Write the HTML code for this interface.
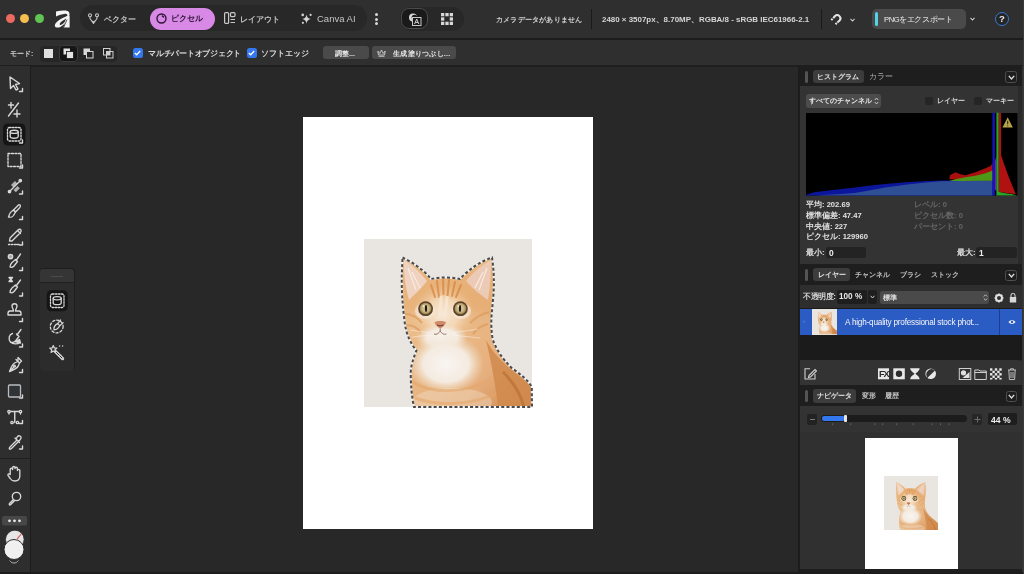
<!DOCTYPE html>
<html><head><meta charset="utf-8">
<style>
*{box-sizing:border-box;margin:0;padding:0}
html,body{width:1024px;height:574px;overflow:hidden;background:#272727;font-family:"Liberation Sans",sans-serif;color:#d8d8d8}
.a{position:absolute}
.t{position:absolute;white-space:nowrap;line-height:1}
svg{position:absolute;overflow:visible}
.t{will-change:transform}
</style></head><body>

<!-- top toolbar -->
<div class="a" style="left:0;top:0;width:1024px;height:38px;background:#2f2f2f"></div>
<div class="a" style="left:0;top:38px;width:1024px;height:1.5px;background:#1c1c1c"></div>
<!-- traffic lights -->
<div class="a" style="left:6px;top:14px;width:9px;height:9px;border-radius:50%;background:#ec6a5e"></div>
<div class="a" style="left:20px;top:14px;width:9px;height:9px;border-radius:50%;background:#f4bf4f"></div>
<div class="a" style="left:34.5px;top:14px;width:9px;height:9px;border-radius:50%;background:#61c554"></div>
<!-- logo a -->
<svg style="left:54px;top:9.5px" width="16" height="18" viewBox="0 0 16 18">
<path d="M2 1.6 C6 0.9 10 0.4 12.5 0.7 C15.2 1.1 16.2 3.2 15.2 6.6 L13.4 6.6 C13.8 4.8 13 3.5 11 3.7 C8 4.1 5 5.1 2 6.4 Z" fill="#f4f4f4"/>
<path d="M14.6 5.2 C10 7.3 4 9.8 1.5 13.4 C0.1 15.6 1 17.6 3.6 17.6 C7.2 17.6 11.2 14 15 7.8 Z M12.8 8 C10 9.9 6.8 11.7 5.9 13.4 C5.3 14.6 6.3 15.4 7.7 14.6 C9.9 13.3 11.7 10.9 12.8 8 Z" fill="#f4f4f4" fill-rule="evenodd"/>
<path d="M12.6 7 L15.6 6 L15.6 17.5 L9.4 17.5 Z" fill="#f4f4f4"/>
<path d="M13 9.5 L9.6 17.6" stroke="#2f2f2f" stroke-width="0.8"/>
</svg>
<!-- persona group -->
<div class="a" style="left:80px;top:5px;width:287px;height:26px;border-radius:13px;background:#282828"></div>
<svg style="left:87.5px;top:13px" width="11" height="12" viewBox="0 0 11 12">
<circle cx="2" cy="2.2" r="1.5" fill="none" stroke="#c8c8c8" stroke-width="1.1"/>
<circle cx="9" cy="2.2" r="1.5" fill="none" stroke="#c8c8c8" stroke-width="1.1"/>
<path d="M2 3.7 V5.5 L5.5 10.5 L9 5.5 V3.7 M4 8 C5 9 6 9 7 8" fill="none" stroke="#c8c8c8" stroke-width="1.1" stroke-linejoin="round"/>
</svg>
<div class="t" style="left:104px;top:15.5px;font-size:8px;font-weight:bold;color:#c4c4c4">ベクター</div>
<div class="a" style="left:150px;top:7.5px;width:65px;height:22.5px;border-radius:11px;background:#d889e6"></div>
<svg style="left:156px;top:13px" width="11" height="11" viewBox="0 0 11 11">
<circle cx="5.5" cy="5.5" r="4.5" fill="none" stroke="#2e1535" stroke-width="1.4"/>
<path d="M6.3 2.9 L7.6 4.1" stroke="#2e1535" stroke-width="1.3" stroke-linecap="round"/>
</svg>
<div class="t" style="left:171px;top:15.3px;font-size:8px;font-weight:bold;color:#2a1232">ピクセル</div>
<svg style="left:224px;top:12px" width="12" height="12" viewBox="0 0 12 12">
<rect x="0.6" y="0.6" width="4" height="10.8" rx="1" fill="none" stroke="#c8c8c8" stroke-width="1.2"/>
<rect x="6.5" y="0.6" width="4.5" height="4" rx="1" fill="none" stroke="#c8c8c8" stroke-width="1.2"/>
<path d="M6.5 7.5 H11 M6.5 10.5 H11" stroke="#c8c8c8" stroke-width="1.2"/>
</svg>
<div class="t" style="left:240px;top:15.5px;font-size:8px;font-weight:bold;color:#c4c4c4">レイアウト</div>
<svg style="left:296px;top:8px" width="20" height="22" viewBox="296 8 20 22">
<path d="M306.5 14.5 Q307 18.5 310.8 19.1 Q307 19.7 306.5 23.7 Q306 19.7 302.3 19.1 Q306 18.5 306.5 14.5 Z" fill="#d6d6d6"/>
<circle cx="302.7" cy="14.9" r="1.3" fill="#d0d0d0"/>
<circle cx="310.6" cy="14.9" r="1.1" fill="#d0d0d0"/>
<circle cx="302.9" cy="22.8" r="1.1" fill="#d0d0d0"/>
</svg>
<div class="t" style="left:317px;top:13.5px;font-size:9.5px;color:#c4c4c4">Canva AI</div>
<!-- kebab -->
<div class="a" style="left:375px;top:13px;width:3.2px;height:3.2px;border-radius:50%;background:#d8d8d8"></div>
<div class="a" style="left:375px;top:17.6px;width:3.2px;height:3.2px;border-radius:50%;background:#d8d8d8"></div>
<div class="a" style="left:375px;top:22.2px;width:3.2px;height:3.2px;border-radius:50%;background:#d8d8d8"></div>
<!-- mode group -->
<div class="a" style="left:400px;top:7px;width:64px;height:24px;border-radius:12px;background:#282828"></div>
<div class="a" style="left:400.7px;top:8.4px;width:27.3px;height:21.1px;border-radius:8px;background:#1a1a1a;border:1px solid #4a4a4a"></div>
<svg style="left:408px;top:13px" width="14" height="13" viewBox="0 0 14 13">
<circle cx="5" cy="4.5" r="4" fill="#d8d8d8"/>
<circle cx="6.5" cy="4.5" r="2.8" fill="#1a1a1a"/>
<rect x="4.5" y="4.5" width="8.5" height="8" fill="#1a1a1a" stroke="#c8c8c8" stroke-width="1"/>
<path d="M6.6 11 L8.7 6 L10.8 11 M7.4 9.4 H10" fill="none" stroke="#d0d0d0" stroke-width="1"/>
</svg>
<svg style="left:441px;top:12.5px" width="12" height="12" viewBox="0 0 12 12">
<g fill="#d8d8d8">
<rect x="0" y="0" width="3.3" height="3.3"/><rect x="4.35" y="0" width="3.3" height="3.3"/><rect x="8.7" y="0" width="3.3" height="3.3"/>
<rect x="0" y="4.35" width="3.3" height="3.3"/><rect x="8.7" y="4.35" width="3.3" height="3.3"/>
<rect x="0" y="8.7" width="3.3" height="3.3"/><rect x="4.35" y="8.7" width="3.3" height="3.3"/><rect x="8.7" y="8.7" width="3.3" height="3.3"/>
</g>
</svg>
<!-- status -->
<div class="t" style="left:495.5px;top:16px;font-size:7px;letter-spacing:0.2px;font-weight:bold;color:#d2d2d2">カメラデータがありません</div>
<div class="a" style="left:591px;top:9px;width:1px;height:20px;background:#1a1a1a"></div>
<div class="t" style="left:601.8px;top:15.5px;font-size:7.95px;font-weight:bold;color:#d6d6d6">2480 × 3507px、8.70MP、RGBA/8 - sRGB IEC61966-2.1</div>
<div class="a" style="left:821px;top:9px;width:1px;height:20px;background:#1a1a1a"></div>
<svg style="left:826px;top:8px" width="32" height="24" viewBox="826 8 32 24">
<path d="M833.2 18.2 L835.04 16.04 A3.2 3.2 0 0 1 839.56 20.56 L837.4 22.4" fill="none" stroke="#e6e6e6" stroke-width="2"/>
<path d="M832.6 18.8 L831.3 20.1 M836.8 23 L835.5 24.3" fill="none" stroke="#e6e6e6" stroke-width="2"/>
</svg>
<svg style="left:849.5px;top:17.5px" width="5" height="4" viewBox="0 0 5 4"><path d="M0.5 0.8 L2.5 3 L4.5 0.8" fill="none" stroke="#cfcfcf" stroke-width="1.1"/></svg>
<!-- export -->
<div class="a" style="left:872px;top:9px;width:94px;height:19.5px;border-radius:5px;background:#4a4a4a"></div>
<div class="a" style="left:875px;top:12px;width:3px;height:14px;border-radius:1.5px;background:#52d4e8"></div>
<div class="t" style="left:884px;top:16px;font-size:7.6px;letter-spacing:-0.4px;color:#ececec">PNGをエクスポート</div>
<svg style="left:970px;top:17px" width="5" height="4" viewBox="0 0 5 4"><path d="M0.5 0.8 L2.5 3 L4.5 0.8" fill="none" stroke="#cfcfcf" stroke-width="1.1"/></svg>
<div class="a" style="left:995.4px;top:11.6px;width:14px;height:14px;border-radius:50%;background:#262626;border:1.4px solid #3a78d8"></div>
<div class="t" style="left:999.4px;top:14.3px;font-size:9.5px;font-weight:bold;color:#ececec">?</div>
<!-- context bar -->
<div class="a" style="left:0;top:39.5px;width:1024px;height:26.5px;background:#2f2f2f"></div>
<div class="a" style="left:0;top:65px;width:1024px;height:1.5px;background:#1e1e1e"></div>
<div class="t" style="left:10px;top:51px;font-size:6.8px;font-weight:bold;color:#d0d0d0">モード:</div>
<div class="a" style="left:40px;top:45.5px;width:77px;height:16.5px;border-radius:4px;background:#262626"></div>
<div class="a" style="left:44px;top:49px;width:9px;height:9px;background:#e0e0e0"></div>
<div class="a" style="left:58.5px;top:44.5px;width:19px;height:17px;border-radius:4px;background:#151515;border:1px solid #3c3c3c"></div>
<svg style="left:63px;top:48px" width="11" height="11" viewBox="0 0 11 11">
<rect x="0.5" y="0.5" width="6.5" height="6" fill="#e4e4e4"/>
<rect x="3.5" y="3.5" width="7" height="7" fill="#e4e4e4" stroke="#151515" stroke-width="0.8"/>
</svg>
<svg style="left:83px;top:48px" width="11" height="11" viewBox="0 0 11 11">
<rect x="0.5" y="0.5" width="6.5" height="6.5" fill="#d8d8d8"/>
<rect x="3.5" y="3.5" width="6.5" height="6.5" fill="#262626" stroke="#d8d8d8" stroke-width="1"/>
</svg>
<svg style="left:103px;top:48px" width="11" height="11" viewBox="0 0 11 11">
<rect x="0.5" y="0.5" width="6.5" height="6.5" fill="none" stroke="#d0d0d0" stroke-width="1"/>
<rect x="3.5" y="3.5" width="6.5" height="6.5" fill="none" stroke="#d0d0d0" stroke-width="1"/>
<rect x="3.5" y="3.5" width="3.5" height="3.5" fill="#d0d0d0"/>
</svg>
<div class="a" style="left:132.5px;top:48px;width:10px;height:10px;border-radius:2.5px;background:#3478f0"></div>
<svg style="left:134px;top:50px" width="7" height="6" viewBox="0 0 7 6"><path d="M0.8 3 L2.7 4.8 L6.2 1" fill="none" stroke="#fff" stroke-width="1.3"/></svg>
<div class="t" style="left:147.5px;top:49.5px;font-size:8px;letter-spacing:-0.25px;font-weight:bold;color:#dcdcdc">マルチパートオブジェクト</div>
<div class="a" style="left:246.5px;top:48px;width:10px;height:10px;border-radius:2.5px;background:#3478f0"></div>
<svg style="left:248px;top:50px" width="7" height="6" viewBox="0 0 7 6"><path d="M0.8 3 L2.7 4.8 L6.2 1" fill="none" stroke="#fff" stroke-width="1.3"/></svg>
<div class="t" style="left:260.5px;top:49.5px;font-size:7.9px;font-weight:bold;color:#dcdcdc">ソフトエッジ</div>
<div class="a" style="left:323px;top:46.3px;width:45.5px;height:13px;border-radius:3px;background:#4a4a4a"></div>
<div class="t" style="left:335px;top:49.5px;font-size:7px;font-weight:bold;color:#e8e8e8">調整...</div>
<div class="a" style="left:371.5px;top:46.3px;width:84.5px;height:13px;border-radius:3px;background:#4a4a4a"></div>
<svg style="left:377px;top:48.5px" width="9" height="8" viewBox="0 0 9 8">
<path d="M0.8 2 L2.8 4.5 L4.5 1 L6.2 4.5 L8.2 2 L7.5 6 L1.5 6 Z" fill="none" stroke="#cfcfcf" stroke-width="0.9"/>
<path d="M1.5 7.3 H7.5" stroke="#cfcfcf" stroke-width="0.9"/>
</svg>
<div class="t" style="left:392.5px;top:49.5px;font-size:7.2px;letter-spacing:0.26px;font-weight:bold;color:#e4e4e4">生成塗りつぶし...</div>

<!-- left toolbar -->
<div class="a" style="left:0;top:66px;width:30px;height:508px;background:#2e2e2e"></div>
<div class="a" style="left:30px;top:66px;width:1px;height:508px;background:#1c1c1c"></div>
<div class="a" style="left:0;top:457.5px;width:30px;height:1px;background:#1f1f1f"></div>
<svg style="left:0;top:66px" width="30" height="508" viewBox="0 66 30 508">
<g fill="none" stroke="#d8d8d8" stroke-width="1.4" stroke-linejoin="round" stroke-linecap="round">
<!-- flyout corners -->
<path d="M19.5 91.5 H22.5 V88.5"/>
<path d="M19.5 143 H22.5 V140"/>
<path d="M19.5 168 H22.5 V165"/>
<path d="M19.5 194 H22.5 V191"/>
<path d="M19.5 219.5 H22.5 V216.5"/>
<path d="M19.5 245 H22.5 V242"/>
<path d="M19.5 270.5 H22.5 V267.5"/>
<path d="M19.5 296 H22.5 V293"/>
<path d="M19.5 321.5 H22.5 V318.5"/>
<path d="M19.5 347 H22.5 V344"/>
<path d="M19.5 372.5 H22.5 V369.5"/>
<path d="M19.5 398 H22.5 V395"/>
<path d="M19.5 423.5 H22.5 V420.5"/>
<path d="M19.5 449 H22.5 V446"/>
<!-- pointer -->
<path d="M10 77 L19.5 83.5 L15.5 84.5 L18 89 L16 90 L13.5 85.5 L10.5 88.5 Z"/>
<!-- crop/plus -->
<path d="M11 102.5 V108 M8.5 105 H13.5 M8.5 116 L18.5 103 M17 110 V117 M14 114 H20"/>
</g>
<!-- selected tool bg -->
<rect x="3" y="123.5" width="22.5" height="22" rx="4.5" fill="#151515"/>
<g fill="none" stroke="#d8d8d8" stroke-width="1.35" stroke-linejoin="round" stroke-linecap="round">
<path d="M19.5 143 H22.5 V140"/>
<rect x="7.5" y="127.5" width="13.5" height="13.5" rx="2" stroke-dasharray="1.6 1.4"/>
<ellipse cx="14.2" cy="131.8" rx="4" ry="1.6"/>
<path d="M10.2 131.8 V136.5 C10.2 138.8 18.2 138.8 18.2 136.5 V131.8"/>
<!-- rect marquee -->
<rect x="8" y="153.5" width="13" height="13" stroke-dasharray="2 1.5"/>
<!-- selection brush -->
<path d="M9.5 191.5 L20.5 180.5"/>
<circle cx="9.5" cy="191.5" r="1.2"/>
<circle cx="20.3" cy="180.5" r="1.2"/>
<path d="M11 185 L15 181 L17.5 183.5 L13.5 187.5 Z M13.5 190 L17.5 186 L19.8 188.3 L15.8 192.3 Z" fill="#d2d2d2" stroke="none" opacity="0.8"/>
<!-- brush -->
<path d="M20 205 C21 206 20 207.5 18.5 209 L15.5 212 L13.5 210 L16.5 207 C18 205.5 19 204 20 205 Z"/>
<path d="M13.5 210 L15.5 212 L13.5 215.5 C12.5 217 10 217.5 8.5 217 C9 215 10 212.5 11.5 211.5 Z"/>
<!-- pixel/pencil -->
<path d="M10 238 L18 230 C19 229 20.5 229 21 230 C21.5 231 21 232 20 233 L12 241 L9.5 241 Z M17.5 230.5 L20.5 233.5"/>
<path d="M8.5 244.5 H10 M11.5 244.5 H13 M14.5 244.5 H16 M17 244.5 H19" stroke-width="1.3"/>
<!-- erase/dodge -->
<circle cx="10.5" cy="256.5" r="2.2" fill="#a8a8a8"/>
<path d="M20.5 254 L16 260.5 M15.5 259.5 L17.5 261.5 L14 266 C13 267 11 267.5 10 267 C10 265.5 11 263.5 12 262.5 Z"/>
<!-- burn/sponge -->
<path d="M9 277.5 H12.5 L10.8 279.5 L12.5 281.5 H9 L10.8 279.5 Z" fill="#d2d2d2"/>
<path d="M20.5 280 L16 286 M15.5 285 L17.5 287 L14 291.5 C13 292.5 11 293 10 292.5 C10 291 11 289 12 288 Z"/>
<!-- stamp -->
<path d="M12 306 C12 303 17 303 17 306 C17 308 15.5 309 15.5 311 H19 C20.5 311 21 312 21 313.5 V315 H8 V313.5 C8 312 8.5 311 10 311 H13.5 C13.5 309 12 308 12 306 Z"/>
<!-- smudge/repair -->
<path d="M21 329.5 L17 335 M16.5 334 L19 336.5 L15.5 341 C14 342.5 11.5 342.5 10.5 342"/>
<path d="M12.5 333.5 C9 334.5 8 339 10.5 342 C13 344.5 17.5 344.5 20 342.5" />
<path d="M15 341.5 L19.5 339.5 L20.5 343 Z" fill="#d2d2d2"/>
<!-- pen -->
<path d="M18 357.5 L21.5 361 L19.5 363 L18 366.5 C16 369 12.5 370.5 9.5 371.5 C10.5 368.5 12 365 14.5 363 L18 361.5 Z M16 359.5 L19.5 363 M9.5 371.5 L14 367"/>
<circle cx="14.5" cy="366" r="0.9"/>
<!-- rectangle -->
<rect x="8.5" y="385" width="12" height="12" rx="1" fill="#2f3335" stroke="#bcbcbc" stroke-width="1.3"/>
<!-- text tool -->
<path d="M9 411.5 H20.5 M14.75 411.5 V422.5 M9 411.5 V414 M20.5 411.5 V414" stroke-width="1.4"/>
<circle cx="9" cy="411.5" r="1.2" fill="#2c2c2c"/>
<circle cx="20.5" cy="411.5" r="1.2" fill="#2c2c2c"/>
<circle cx="12" cy="422.5" r="1.2" fill="#2c2c2c"/>
<circle cx="17.5" cy="422.5" r="1.2" fill="#2c2c2c"/>
<!-- eyedropper -->
<path d="M17.5 436.5 C18.5 435.5 20.5 435.5 21 437 C21.5 438.5 20.5 439.5 19.5 440.5 L18.5 441.5 L16 439 Z M15 438 L19.5 442.5 M16.5 440.5 L10.5 446.5 C9.5 447.5 9 448.5 9.5 449 C10 449.5 11 449 12 448 L18 442"/>
<!-- hand -->
<path d="M10.2 474.5 V469.6 Q10.2 468.2 11.4 468.2 Q12.6 468.2 12.6 469.6 V467.9 Q12.6 466.5 13.8 466.5 Q15 466.5 15 467.9 V468.6 Q15 467.2 16.2 467.2 Q17.4 467.2 17.4 468.6 V470.6 Q17.4 469.3 18.6 469.3 Q19.8 469.3 19.8 470.6 V476 Q19.8 481 14.8 481 Q11.8 481 10.2 478.5 L8.2 475.6 Q7.5 474.4 8.6 473.9 Q9.5 473.6 10.2 474.5 Z"/>
<!-- zoom -->
<circle cx="16.5" cy="496.5" r="4.2"/>
<path d="M13.5 499.5 L9.5 503.5 C8.8 504.2 9.5 505.5 10.5 504.8 L14.5 500.8"/>
</g>
<!-- dots box -->
<rect x="2" y="516" width="25" height="9.5" rx="2" fill="#474747"/>
<circle cx="9.5" cy="520.8" r="1.4" fill="#e8e8e8"/><circle cx="14.5" cy="520.8" r="1.4" fill="#e8e8e8"/><circle cx="19.5" cy="520.8" r="1.4" fill="#e8e8e8"/>
<!-- colours -->
<circle cx="14.8" cy="539.5" r="9.3" fill="#e6e6e6" stroke="#2e2e2e" stroke-width="0.8"/>
<path d="M17.2 538.8 L21.2 534" stroke="#e05050" stroke-width="1.1"/>
<circle cx="14" cy="549.5" r="10" fill="#f0f0f0" stroke="#2c2c2c" stroke-width="1"/>
<path d="M10.5 561.5 C12 563.5 16 563.5 17.5 561.5 M9.5 560.5 L10.5 561.5 M17.5 561.5 L18.5 560.5" fill="none" stroke="#bdbdbd" stroke-width="0.9"/>
</svg>

<!-- canvas -->
<div class="a" style="left:31px;top:66.5px;width:767px;height:508px;background:#282828"></div>
<div class="a" style="left:303px;top:117px;width:290px;height:412px;background:#ffffff"></div>
<svg style="left:0;top:0;width:0;height:0" width="0" height="0"><defs>
<linearGradient id="fur" x1="0" y1="0" x2="0.9" y2="1">
<stop offset="0" stop-color="#f0cba0"/><stop offset="0.45" stop-color="#ebbd8a"/><stop offset="0.8" stop-color="#e6b07e"/><stop offset="1" stop-color="#d48e56"/>
</linearGradient>
<radialGradient id="face" cx="0.5" cy="0.5" r="0.5">
<stop offset="0" stop-color="#f8e8d6"/><stop offset="0.5" stop-color="#f3d6b4"/><stop offset="1" stop-color="#ecc08e" stop-opacity="0"/>
</radialGradient>
<radialGradient id="chest" cx="0.5" cy="0.5" r="0.5">
<stop offset="0" stop-color="#f8f5f1"/><stop offset="0.6" stop-color="#f4ebe1"/><stop offset="1" stop-color="#f0dcc4" stop-opacity="0"/>
</radialGradient>
<radialGradient id="eye" cx="0.5" cy="0.45" r="0.5">
<stop offset="0" stop-color="#ddd0a4"/><stop offset="0.6" stop-color="#c8b482"/><stop offset="0.85" stop-color="#a08a58"/><stop offset="1" stop-color="#5a4428"/>
</radialGradient>
<filter id="bl6" x="-30%" y="-30%" width="160%" height="160%"><feGaussianBlur stdDeviation="5"/></filter><filter id="bl1" x="-20%" y="-20%" width="140%" height="140%"><feGaussianBlur stdDeviation="0.6"/></filter><clipPath id="catclip"><path id="catp" d="M402.5 257.5 C412 262 424 270 431 279 C440 277 451 277 460 279 C468 270 481 261 492 257.5 C494 270 494.5 285 493 300 C492 312 490 322 492.6 339 C496 349 502 358.5 511.8 368 C520 374 528 380 531.8 387 L532 407 L414 407 C412 398 410.5 385 410.8 371 C411.5 362 415 355 416.4 350.4 C411 344 406 335 404.4 320 C402.5 305 401.5 290 401.8 275 Z"/></clipPath>
<g id="catart">
<rect x="364" y="239" width="168" height="168" fill="#e9e6e2"/>
<g clip-path="url(#catclip)">
<rect x="364" y="239" width="168" height="168" fill="url(#fur)"/>
<!-- head tint -->
<path d="M400 262 C420 275 470 275 496 262 L498 318 C470 306 420 306 398 318 Z" fill="#e4a466" opacity="0.5" filter="url(#bl6)"/>
<!-- ears inner -->
<path d="M404 260 C413 266 421 273 427 281 C420 290 413 296 409 300 C405 285 403.5 272 404 260 Z" fill="#efd2c0" filter="url(#bl1)"/>
<path d="M491 260 C482 265 473 272 466 281 C474 290 482 296 488 300 C490.5 285 491 272 491 260 Z" fill="#ebcab6" filter="url(#bl1)"/>
<path d="M408 268 L416 290 M412 272 L420 288 M487 268 L479 290 M483 272 L475 288" stroke="#faf2ea" stroke-width="1.2" opacity="0.8"/>
<!-- face lighter -->
<ellipse cx="443" cy="314" rx="32" ry="30" fill="url(#face)"/>
<!-- forehead stripes -->
<path d="M437 281 L439 297 M443 279 L443.5 294 M449 280 L447.5 296 M455 282 L452 296 M431 285 L435 297 M461 285 L456 297" stroke="#d88c48" stroke-width="2" stroke-linecap="round" opacity="0.85" filter="url(#bl1)"/>
<path d="M441 296 C441 302 440 310 440 318 M447 296 C447 302 446 310 445 318" stroke="#f7e8d6" stroke-width="3" opacity="0.8"/>
<!-- cheek stripes -->
<path d="M405 314 C413 314 418 318 422 323 M406 325 C413 325 418 328 421 333 M489 312 C481 314 475 318 470 323 M488 324 C481 326 476 329 473 334" stroke="#dc9a5c" stroke-width="2.2" fill="none" opacity="0.7" filter="url(#bl1)"/>
<!-- muzzle & chest -->
<ellipse cx="442" cy="338" rx="26" ry="15" fill="url(#chest)"/>
<ellipse cx="446" cy="364" rx="38" ry="30" fill="url(#chest)"/>
<ellipse cx="452" cy="402" rx="40" ry="14" fill="#f0dcc4" opacity="0.45"/>
<!-- chest bands -->
<path d="M413 382 C430 393 462 395 490 380 M415 398 C436 406 472 406 500 392" stroke="#e4a66a" stroke-width="3" fill="none" opacity="0.6"/>
<!-- right shoulder dark -->
<path d="M486 340 C496 358 510 370 532 386 L532 407 L498 407 C496 388 492 366 486 340 Z" fill="#d08a4c" opacity="0.85"/>
<path d="M503 372 C514 383 521 395 524 407" stroke="#b56a34" stroke-width="3" fill="none" opacity="0.6"/>
</g>
<ellipse cx="425" cy="311" rx="10" ry="8" fill="#f6e8d8" opacity="0.7" filter="url(#bl1)"/>
<ellipse cx="461" cy="311" rx="10" ry="8" fill="#f6e8d8" opacity="0.7" filter="url(#bl1)"/>
<!-- eyes -->
<circle cx="425.6" cy="308.7" r="7.4" fill="#5a4028"/>
<circle cx="425.6" cy="309" r="6.3" fill="url(#eye)"/>
<ellipse cx="426" cy="308.5" rx="1.1" ry="3.4" fill="#1e160e"/>
<circle cx="423.5" cy="306" r="1" fill="#fff" opacity="0.7"/>
<circle cx="460.4" cy="308.7" r="7.4" fill="#5a4028"/>
<circle cx="460.4" cy="309" r="6.3" fill="url(#eye)"/>
<ellipse cx="460" cy="308.5" rx="1.1" ry="3.4" fill="#1e160e"/>
<circle cx="458.3" cy="306" r="1" fill="#fff" opacity="0.7"/>
<!-- nose & mouth -->
<path d="M434.5 322 C437 320.5 443 320.5 446 322 C445.5 325 442.5 327.5 440.2 328.5 C438 327.5 435 325 434.5 322 Z" fill="#d08a6a"/>
<path d="M437 325 C438.5 326 441.8 326 443.4 325" stroke="#5a3424" stroke-width="1" fill="none"/>
<path d="M440.2 328.5 V331 M434 334 C437 335 439 333 440.2 331 C441.4 333 443.4 335 446.4 334" stroke="#8a6050" stroke-width="0.9" fill="none"/>
<!-- whiskers -->
<path d="M430 333 L410 330 M430 335 L412 337 M452 333 L478 329 M452 335 L480 338" stroke="#fbf6f0" stroke-width="0.6" opacity="0.8"/>
</g></defs></svg>
<svg style="left:364px;top:239px" width="168" height="168" viewBox="364 239 168 168"><use href="#catart"/><!-- selection ants -->
<use href="#catp" fill="none" stroke="#f4f4f4" stroke-width="1.8"/>
<use href="#catp" fill="none" stroke="#4a4a4a" stroke-width="2" stroke-dasharray="3 2.2"/>
</svg>

<!-- floating sub-toolbar -->
<div class="a" style="left:39.5px;top:268.3px;width:35px;height:103px;border-radius:4px;background:#1e1e1e"></div>
<div class="a" style="left:40.3px;top:269px;width:33.5px;height:101.5px;border-radius:3.5px;background:#2c2c2c"></div>
<div class="a" style="left:40.3px;top:269px;width:33.5px;height:13.3px;border-radius:3.5px 3.5px 0 0;background:#353535"></div>
<div class="a" style="left:40.3px;top:282.3px;width:33.5px;height:1px;background:#1f1f1f"></div>
<div class="a" style="left:51px;top:275.5px;width:11.5px;height:1.2px;background:#4c4c4c"></div>
<svg style="left:40px;top:283px" width="34" height="88" viewBox="40 283 34 88">
<rect x="46.7" y="290.3" width="21" height="21" rx="4.5" fill="#151515"/>
<g fill="none" stroke="#d8d8d8" stroke-width="1.3" stroke-linejoin="round" stroke-linecap="round">
<rect x="50.5" y="294" width="13.5" height="13.5" rx="2" stroke-dasharray="1.6 1.4"/>
<ellipse cx="57.2" cy="298.3" rx="4" ry="1.6"/>
<path d="M53.2 298.3 V303 C53.2 305.3 61.2 305.3 61.2 303 V298.3"/>
<circle cx="56.7" cy="326.5" r="6.4" stroke-dasharray="2.2 2"/>
<path d="M54 330 C53.6 327.5 55.2 324.8 57.6 323.6 L59.7 325.7 C58.6 328 56.5 329.6 54 330 Z" stroke-width="1.2"/>
<path d="M57.6 323.6 L60.6 320 M59.7 325.7 L63.2 322.6" stroke-width="1.2"/>
<path d="M53.30 345.50 L54.30 347.92 L56.91 348.13 L54.92 349.83 L55.53 352.37 L53.30 351.00 L51.07 352.37 L51.68 349.83 L49.69 348.13 L52.30 347.92 Z" stroke-width="1.2"/>
<path d="M55.8 351.8 L62.6 358.6" stroke-width="3.2"/>
<path d="M56.4 352.4 L62 358" stroke="#2c2c2c" stroke-width="1"/>
<path d="M59 356.6 L60.6 355" stroke="#d8d8d8" stroke-width="1"/>
<circle cx="59.6" cy="346" r="0.7" fill="#d8d8d8" stroke="none"/>
<circle cx="62.6" cy="346" r="0.7" fill="#d8d8d8" stroke="none"/>
</g>
</svg>

<!-- right panel -->
<div class="a" style="left:798px;top:66px;width:2px;height:508px;background:#1c1c1c"></div>
<div class="a" style="left:800px;top:66px;width:224px;height:508px;background:#333333"></div>
<div class="a" style="left:1017.5px;top:86px;width:4.5px;height:488px;background:#2a2a2a"></div>

<!-- histogram header -->
<div class="a" style="left:800px;top:66px;width:222px;height:20px;background:#1e1e1e"></div>
<div class="a" style="left:804.5px;top:70.5px;width:3.2px;height:12px;border-radius:1.5px;background:#545454"></div>
<div class="a" style="left:812.5px;top:70px;width:51.7px;height:13px;border-radius:3px;background:#3c3c3c"></div>
<div class="t" style="left:817.4px;top:73px;font-size:7.2px;font-weight:bold;color:#e2e2e2">ヒストグラム</div>
<div class="t" style="left:868.5px;top:72.5px;font-size:7.8px;color:#b0b0b0">カラー</div>
<div class="a" style="left:1005.3px;top:71px;width:11.5px;height:11.5px;border-radius:2.5px;border:1px solid #4e4e4e;background:#1e1e1e"></div>
<svg style="left:1007.5px;top:74.5px" width="7" height="5" viewBox="0 0 7 5"><path d="M0.8 0.8 L3.5 4 L6.2 0.8" fill="none" stroke="#e0e0e0" stroke-width="1.3"/></svg>
<!-- channel dropdown -->
<div class="a" style="left:805.7px;top:94px;width:75.5px;height:13.8px;border-radius:3px;background:#4c4c4c"></div>
<div class="t" style="left:809px;top:97px;font-size:7.4px;font-weight:bold;color:#e4e4e4">すべてのチャンネル</div>
<svg style="left:874px;top:97px" width="5" height="8" viewBox="0 0 5 8"><path d="M0.8 3 L2.5 1 L4.2 3 M0.8 5 L2.5 7 L4.2 5" fill="none" stroke="#d0d0d0" stroke-width="0.9"/></svg>
<div class="a" style="left:925px;top:96.5px;width:8px;height:8px;border-radius:2px;background:#252525"></div>
<div class="t" style="left:936.5px;top:97.5px;font-size:6.7px;font-weight:bold;color:#d6d6d6">レイヤー</div>
<div class="a" style="left:974px;top:96.5px;width:8px;height:8px;border-radius:2px;background:#252525"></div>
<div class="t" style="left:985.5px;top:97.5px;font-size:6.7px;font-weight:bold;color:#d6d6d6">マーキー</div>
<!-- histogram -->
<svg style="left:805.5px;top:112.7px" width="211.5" height="82.5" viewBox="805.5 112.7 211.5 82.5">
<rect x="805.5" y="112.7" width="211.5" height="82.5" fill="#000"/>
<path d="M805.5 194.5 L809 193.5 L813.7 192 L830 190 L854.7 187.2 L870 185.3 L884.8 183.7 L905 182 L923 181 L940 180.3 L992 180 L992 195.2 L805.5 195.2 Z" fill="#0c169c"/>
<path d="M815 195.2 L827 194.5 L840 193.8 L854 192.6 L870 190 L884.8 187.2 L905 184.5 L923 182.4 L940 181 L960 180.8 L992 180.5 L992 195.2 Z" fill="#2f4f94"/>
<path d="M948.8 179 L949.5 175 L955 172 L960 174 L965 175 L975 172 L985 168 L990 165.7 L992 163 L992 180.5 L975 179 L960 179.5 Z" fill="#a81010"/>
<path d="M948.8 180.6 L955 179 L965 177 L975 175.5 L985 173 L990.4 171 L992 170 L992 180.5 L960 180.8 Z" fill="#4e9818"/>
<path d="M994 162 L996 155.5 L996 190 L994 190 Z" fill="#6a2aa0"/>
<rect x="992" y="112.4" width="2.3" height="82.8" fill="#1414c8"/>
<path d="M995.9 112.4 L998.2 112.4 L998.2 191.5 L1005 193 L1012 194 L1016 195.2 L995.9 195.2 Z" fill="#2aa52a"/>
<path d="M998.4 112.4 L1000.6 112.4 L1000.6 155 L1004 165 L1008 176 L1012 186 L1015.4 194 L1000.6 192 L998.4 191.5 Z" fill="#b01212"/>
<path d="M1007.2 117 L1012.3 127.2 L1002 127.2 Z" fill="#b6a446"/>
<path d="M1007.2 120.5 V124 M1007.2 125.2 V126" stroke="#222" stroke-width="1"/>
</svg>
<!-- stats -->
<div class="t" style="left:806px;top:201px;font-size:7.6px;font-weight:bold;color:#e2e2e2">平均: 202.69</div>
<div class="t" style="left:806px;top:211.5px;font-size:7.6px;font-weight:bold;color:#e2e2e2">標準偏差: 47.47</div>
<div class="t" style="left:806px;top:222.5px;font-size:7.6px;font-weight:bold;color:#e2e2e2">中央値: 227</div>
<div class="t" style="left:806px;top:233px;font-size:7.6px;font-weight:bold;color:#e2e2e2">ピクセル: 129960</div>
<div class="t" style="left:913.5px;top:201px;font-size:7.6px;font-weight:bold;color:#666666">レベル: 0</div>
<div class="t" style="left:913.5px;top:211.5px;font-size:7.6px;font-weight:bold;color:#666666">ピクセル数: 0</div>
<div class="t" style="left:913.5px;top:222.5px;font-size:7.6px;font-weight:bold;color:#666666">パーセント: 0</div>
<div class="t" style="left:806px;top:248.5px;font-size:7.6px;font-weight:bold;color:#e2e2e2">最小:</div>
<div class="a" style="left:825.6px;top:246.8px;width:40.3px;height:11px;border-radius:2.5px;background:#232323"></div>
<div class="t" style="left:828.5px;top:248.5px;font-size:8.4px;font-weight:bold;color:#ececec">0</div>
<div class="t" style="left:956.8px;top:248.5px;font-size:7.6px;font-weight:bold;color:#e2e2e2">最大:</div>
<div class="a" style="left:976.3px;top:246.8px;width:40.3px;height:11px;border-radius:2.5px;background:#232323"></div>
<div class="t" style="left:979px;top:248.5px;font-size:8.4px;font-weight:bold;color:#ececec">1</div>

<!-- layers header -->
<div class="a" style="left:800px;top:263.5px;width:222px;height:21.5px;background:#1e1e1e"></div>
<div class="a" style="left:804.8px;top:269px;width:3.2px;height:12px;border-radius:1.5px;background:#545454"></div>
<div class="a" style="left:812.7px;top:268.3px;width:37.3px;height:13px;border-radius:3px;background:#3c3c3c"></div>
<div class="t" style="left:817.5px;top:271px;font-size:7.3px;font-weight:bold;color:#e2e2e2">レイヤー</div>
<div class="t" style="left:855.3px;top:271px;font-size:7.2px;font-weight:bold;color:#c0c0c0">チャンネル</div>
<div class="t" style="left:900.2px;top:271px;font-size:7.2px;font-weight:bold;color:#c0c0c0">ブラシ</div>
<div class="t" style="left:930.7px;top:271px;font-size:7.2px;font-weight:bold;color:#c0c0c0">ストック</div>
<div class="a" style="left:1005.3px;top:269.5px;width:11.5px;height:11.5px;border-radius:2.5px;border:1px solid #4e4e4e;background:#1e1e1e"></div>
<svg style="left:1007.5px;top:273px" width="7" height="5" viewBox="0 0 7 5"><path d="M0.8 0.8 L3.5 4 L6.2 0.8" fill="none" stroke="#e0e0e0" stroke-width="1.3"/></svg>
<!-- opacity row -->
<div class="a" style="left:800px;top:285px;width:222px;height:23px;background:#2e2e2e"></div>
<div class="t" style="left:802.8px;top:293px;font-size:8px;letter-spacing:-0.45px;font-weight:bold;color:#d4d4d4">不透明度:</div>
<div class="a" style="left:837.3px;top:290px;width:29.7px;height:13.5px;border-radius:2px;background:#1e1e1e"></div>
<div class="t" style="left:839px;top:293px;font-size:8.2px;font-weight:bold;color:#e8e8e8">100 %</div>
<div class="a" style="left:868px;top:290px;width:8.5px;height:13.5px;border-radius:2px;background:#1e1e1e"></div>
<svg style="left:870px;top:295px" width="5" height="4" viewBox="0 0 5 4"><path d="M0.6 0.8 L2.5 3 L4.4 0.8" fill="none" stroke="#cfcfcf" stroke-width="1"/></svg>
<div class="a" style="left:879.6px;top:290.5px;width:109.4px;height:13.4px;border-radius:2.5px;background:#4a4a4a"></div>
<div class="t" style="left:882.5px;top:293.5px;font-size:7.4px;font-weight:bold;color:#dcdcdc">標準</div>
<svg style="left:982.5px;top:294px" width="5" height="7" viewBox="0 0 5 7"><path d="M0.8 2.5 L2.5 0.8 L4.2 2.5 M0.8 4.5 L2.5 6.2 L4.2 4.5" fill="none" stroke="#cfcfcf" stroke-width="0.9"/></svg>
<svg style="left:994px;top:292.5px" width="10" height="10" viewBox="0 0 10 10">
<circle cx="5" cy="5" r="3" fill="none" stroke="#e0e0e0" stroke-width="2"/>
<path d="M5 0.5 V2 M5 8 V9.5 M0.5 5 H2 M8 5 H9.5 M1.8 1.8 L2.9 2.9 M7.1 7.1 L8.2 8.2 M1.8 8.2 L2.9 7.1 M7.1 2.9 L8.2 1.8" stroke="#e0e0e0" stroke-width="1.6"/>
</svg>
<svg style="left:1009px;top:291.5px" width="8" height="11" viewBox="0 0 8 11">
<path d="M2 5 V3.2 C2 1 6 1 6 3.2 V5" fill="none" stroke="#cfcfcf" stroke-width="1.1"/>
<rect x="0.8" y="5" width="6.4" height="5.5" fill="#d8d8d8"/>
</svg>
<!-- layer row -->
<div class="a" style="left:800px;top:308px;width:222px;height:1.3px;background:#1a1a1a"></div>
<div class="a" style="left:799.7px;top:309.3px;width:222.3px;height:25.6px;background:#2a5cc4"></div>
<div class="a" style="left:999.3px;top:309.3px;width:1px;height:25.6px;background:#1e3f88"></div>
<div class="t" style="left:803px;top:318px;font-size:6px;color:#7a9ad8">›</div>
<div class="a" style="left:811.7px;top:309.3px;width:25.6px;height:25.6px;background:#f1ede8;overflow:hidden">
<svg style="left:0;top:0" width="25.6" height="25.6" viewBox="364 239 168 168"><use href="#catart"/></svg>
</div>
<div class="t" style="left:845.2px;top:318.5px;font-size:8.2px;letter-spacing:-0.2px;color:#f6f6f6">A high-quality professional stock phot...</div>
<svg style="left:1007.5px;top:318.5px" width="8" height="6" viewBox="0 0 8 6">
<path d="M0.5 3 C2 0.5 6 0.5 7.5 3 C6 5.5 2 5.5 0.5 3 Z" fill="#f0f0f0"/>
<circle cx="4" cy="3" r="1.2" fill="#2a5cc4"/>
</svg>
<!-- empty layers -->
<div class="a" style="left:800px;top:334.9px;width:222px;height:25.6px;background:#1b1b1b"></div>
<!-- layer toolbar -->
<div class="a" style="left:800px;top:360.5px;width:222px;height:24.2px;background:#333333"></div>
<svg style="left:800px;top:360px" width="222" height="25" viewBox="800 360 222 25">
<g fill="none" stroke="#cfcfcf" stroke-width="1.1">
<path d="M810 368.8 H805 V379 H815 V374"/>
<path d="M809 375.5 L815 369.5 L816.5 371 L810.5 377 L808.5 377.5 Z"/>
</g>
<rect x="878" y="368.3" width="11" height="11" fill="#e8e8e8"/>

<rect x="893.3" y="368.3" width="11.5" height="11" fill="#e8e8e8"/>
<circle cx="899" cy="373.8" r="3.2" fill="#2c2c2c"/>
<path d="M910.2 368.3 H919.6 C919.6 371 916.5 372.5 915.5 373.8 C916.5 375 919.6 376.5 919.6 379.3 H910.2 C910.2 376.5 913.5 375 914.5 373.8 C913.5 372.5 910.2 371 910.2 368.3 Z" fill="#e8e8e8"/>
<circle cx="930.7" cy="373.8" r="5.3" fill="#e8e8e8"/>
<path d="M926.8 377.5 L934.5 370" stroke="#333" stroke-width="1.4"/>
<path d="M927.2 377 A5 5 0 0 1 934.3 370.2 Z" fill="#333"/>
<rect x="959.3" y="368.5" width="11.5" height="11" fill="none" stroke="#cfcfcf" stroke-width="1"/>
<circle cx="963.5" cy="372.8" r="2.6" fill="#e0e0e0"/>
<path d="M962.5 378 H969.5 V372 Z" fill="#e0e0e0"/>
<path d="M974.8 370 H979 L980 371 H986.3 V379.5 H974.8 Z M974.8 372.5 H986.3" fill="none" stroke="#cfcfcf" stroke-width="1"/>
<g fill="#e8e8e8">
<rect x="990" y="368.3" width="2.4" height="2.4"/><rect x="994.8" y="368.3" width="2.4" height="2.4"/><rect x="999.3" y="368.3" width="2.4" height="2.4"/>
<rect x="992.4" y="370.7" width="2.4" height="2.4"/><rect x="997.2" y="370.7" width="2.4" height="2.4"/>
<rect x="990" y="373.1" width="2.4" height="2.4"/><rect x="994.8" y="373.1" width="2.4" height="2.4"/><rect x="999.3" y="373.1" width="2.4" height="2.4"/>
<rect x="992.4" y="375.5" width="2.4" height="2.4"/><rect x="997.2" y="375.5" width="2.4" height="2.4"/>
<rect x="990" y="377.9" width="2.4" height="1.6"/><rect x="994.8" y="377.9" width="2.4" height="1.6"/><rect x="999.3" y="377.9" width="2.4" height="1.6"/>
</g>
<g fill="none" stroke="#bdbdbd" stroke-width="1">
<path d="M1008 370 H1016 M1010.5 370 V368.8 H1013.5 V370 M1008.8 370 L1009.4 379.5 H1014.6 L1015.2 370 M1011 372 V378 M1013 372 V378"/>
</g>
</svg>
<div class="t" style="left:878.6px;top:369.8px;font-size:9px;font-weight:bold;letter-spacing:-1px;color:#2a2a2a">FX</div>
<!-- navigator header -->
<div class="a" style="left:800px;top:384.7px;width:222px;height:21.5px;background:#1e1e1e"></div>
<div class="a" style="left:804.8px;top:390px;width:3.2px;height:12px;border-radius:1.5px;background:#545454"></div>
<div class="a" style="left:812.6px;top:389.2px;width:43.8px;height:13.8px;border-radius:3px;background:#3c3c3c"></div>
<div class="t" style="left:816.5px;top:392px;font-size:7.3px;font-weight:bold;color:#e2e2e2">ナビゲータ</div>
<div class="t" style="left:861.7px;top:392px;font-size:7.2px;font-weight:bold;color:#c0c0c0">変形</div>
<div class="t" style="left:885.2px;top:392px;font-size:7.2px;font-weight:bold;color:#c0c0c0">履歴</div>
<div class="a" style="left:1005.7px;top:390.6px;width:11.2px;height:11.2px;border-radius:2.5px;border:1px solid #4e4e4e;background:#1e1e1e"></div>
<svg style="left:1007.8px;top:394px" width="7" height="5" viewBox="0 0 7 5"><path d="M0.8 0.8 L3.5 4 L6.2 0.8" fill="none" stroke="#e0e0e0" stroke-width="1.3"/></svg>
<!-- zoom row -->
<div class="a" style="left:800px;top:406.2px;width:222px;height:26px;background:#333333"></div>
<div class="a" style="left:807.3px;top:414px;width:9.4px;height:10.6px;border-radius:2px;background:#222"></div>
<div class="a" style="left:809.5px;top:419px;width:5px;height:1px;background:#7a7a7a"></div>
<div class="a" style="left:820.5px;top:414.8px;width:146.8px;height:7px;border-radius:3.5px;background:#1c1c1c"></div>
<div class="a" style="left:822.3px;top:416.2px;width:22.5px;height:4.4px;border-radius:2.2px;background:#3478f0"></div>
<div class="a" style="left:843.9px;top:414.8px;width:3.2px;height:7.2px;border-radius:1px;background:#e6e6e6"></div>
<svg style="left:821px;top:422.5px" width="130" height="3" viewBox="0 0 130 3"><g fill="#666"><rect x="11.2" y="0.3" width="0.9" height="1.8"/><rect x="29.2" y="0.3" width="0.9" height="1.8"/><rect x="53.4" y="0.3" width="0.9" height="1.8"/><rect x="61.2" y="0.3" width="0.9" height="1.8"/><rect x="75.3" y="0.3" width="0.9" height="1.8"/><rect x="91.7" y="0.3" width="0.9" height="1.8"/><rect x="110.4" y="0.3" width="0.9" height="1.8"/><rect x="119.0" y="0.3" width="0.9" height="1.8"/><rect x="127.6" y="0.3" width="0.9" height="1.8"/></g></svg>
<div class="a" style="left:972.4px;top:414px;width:9.3px;height:10.6px;border-radius:2px;background:#262626"></div>
<svg style="left:973.5px;top:415.5px" width="7" height="7" viewBox="0 0 7 7"><path d="M3.5 0.5 V6.5 M0.5 3.5 H6.5" stroke="#6a6a6a" stroke-width="1"/></svg>
<div class="a" style="left:988.1px;top:413.4px;width:29px;height:11.6px;border-radius:2px;background:#1e1e1e"></div>
<div class="t" style="left:990.5px;top:415.5px;font-size:8.6px;font-weight:bold;color:#ececec">44 %</div>
<!-- navigator preview -->
<div class="a" style="left:800px;top:432.2px;width:222px;height:141.8px;background:#303030"></div>
<div class="a" style="left:864.9px;top:437.5px;width:93.3px;height:131.3px;background:#ffffff"></div>
<div class="a" style="left:800px;top:568.8px;width:222px;height:5.2px;background:#1e1e1e"></div>
<svg style="left:884.4px;top:476px" width="54" height="54" viewBox="364 239 168 168"><use href="#catart"/></svg>

<div class="a" style="left:0;top:571.5px;width:1024px;height:2.5px;background:#1c1c1c"></div>
<div class="a" style="left:1022.5px;top:0;width:1.5px;height:574px;background:#3a3a3a;border-top-right-radius:2px"></div>
</body></html>
